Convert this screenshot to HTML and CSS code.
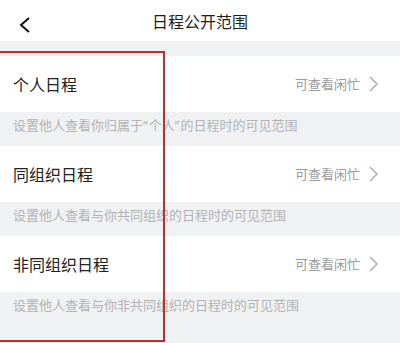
FILE: index.html
```html
<!DOCTYPE html>
<html lang="zh-CN">
<head>
<meta charset="utf-8">
<link rel="stylesheet" href="styles.css">
</head>
<body>
<div class="page">
  <header class="nav">
    <svg class="back" width="14" height="18" viewBox="0 0 14 18"><path d="M11 2 L3 9 L11 16" fill="none" stroke="#111" stroke-width="2"/></svg>
    <div class="title">日程公开范围</div>
  </header>
  <div class="gap"></div>
  <div class="row">
    <span class="label">个人日程</span>
    <span class="value">可查看闲忙<svg class="chev" width="9" height="16" viewBox="0 0 9 16"><path d="M1 1 L8 8 L1 15" fill="none" stroke="#a8a8a8" stroke-width="1.4"/></svg></span>
  </div>
  <div class="desc">设置他人查看你归属于<span class="q">“</span>个人<span class="q">”</span>的日程时的可见范围</div>
  <div class="row">
    <span class="label">同组织日程</span>
    <span class="value">可查看闲忙<svg class="chev" width="9" height="16" viewBox="0 0 9 16"><path d="M1 1 L8 8 L1 15" fill="none" stroke="#a8a8a8" stroke-width="1.4"/></svg></span>
  </div>
  <div class="desc">设置他人查看与你共同组织的日程时的可见范围</div>
  <div class="row">
    <span class="label">非同组织日程</span>
    <span class="value">可查看闲忙<svg class="chev" width="9" height="16" viewBox="0 0 9 16"><path d="M1 1 L8 8 L1 15" fill="none" stroke="#a8a8a8" stroke-width="1.4"/></svg></span>
  </div>
  <div class="desc last">设置他人查看与你非共同组织的日程时的可见范围</div>
  <div class="mark"></div>
</div>
</body>
</html>
```
FILE: styles.css
```css
* { box-sizing: border-box; }
html, body { margin: 0; padding: 0; }
body {
  width: 400px;
  height: 343px;
  overflow: hidden;
  background: #f0f1f3;
  font-family: "Noto Sans CJK SC", "Noto Sans", sans-serif;
}
.page { position: relative; height: 343px; }
.nav {
  position: relative;
  height: 41px;
  background: #fff;
  display: flex;
  align-items: center;
  justify-content: center;
}
.back { position: absolute; left: 18px; top: 16px; }
.title { font-size: 16px; color: #1e1e1e; line-height: 22px; }
.gap { height: 15px; }
.row {
  height: 56px;
  background: #fff;
  display: flex;
  align-items: center;
  justify-content: space-between;
  padding: 0 22px 0 13px;
}
.label { font-size: 16px; color: #222; line-height: 22px; }
.value {
  display: flex;
  align-items: center;
  gap: 9px;
  font-size: 13px;
  color: #9b9b9b;
  line-height: 18px;
}
.chev { display: block; }
.desc {
  height: 34px;
  padding: 3px 13px 0;
  font-size: 13px;
  line-height: 20px;
  color: #b3b3b3;
  background: #f0f1f3;
}
.q { font-family: "Noto Sans", sans-serif; letter-spacing: 1px; }
.mark {
  position: absolute;
  left: -3px;
  top: 51px;
  width: 168px;
  height: 291px;
  border: 2.5px solid #c9282c;
}
```
